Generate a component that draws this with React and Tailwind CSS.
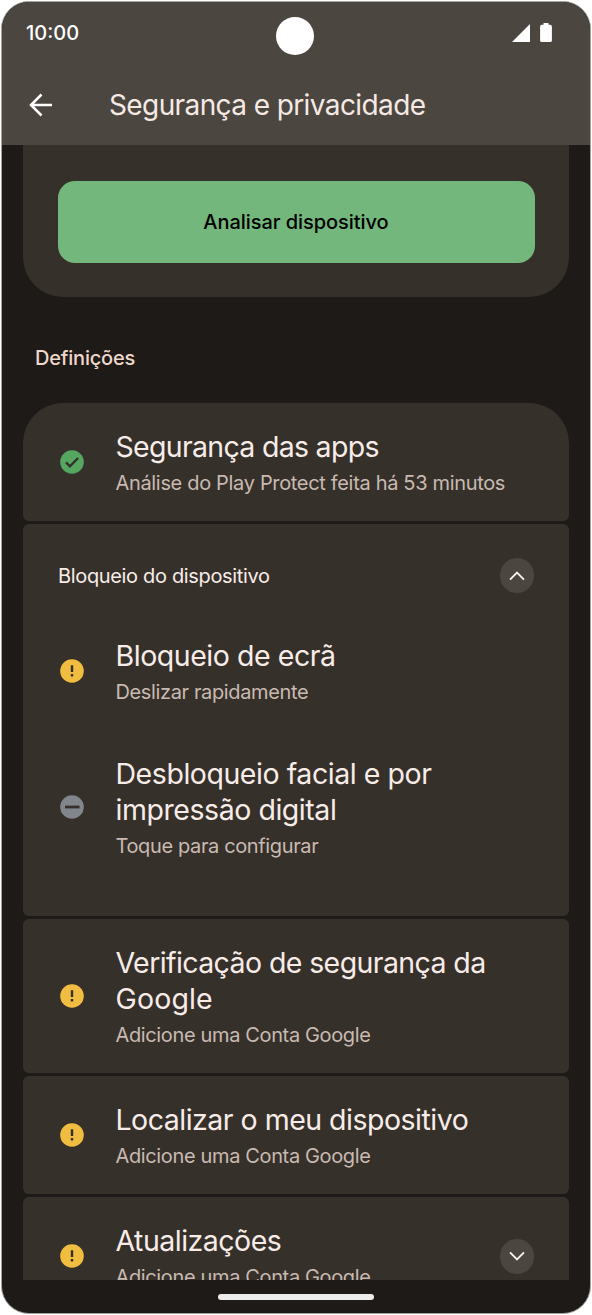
import React, { useState } from 'react';
import clsx from 'clsx';

function StatusIcon({ type }) {
    return (
        <svg width="24" height="24" viewBox="0 0 24 24" className="shrink-0 -mt-[3px]">
            {type === 'ok' && (
                <>
                    <circle cx="12" cy="12" r="11.8" fill="#54a660" />
                    <path d="M6 12.4l3.9 3.9 8.2-8.3" fill="none" stroke="#36302b" strokeWidth="2.3" />
                </>
            )}
            {type === 'warning' && (
                <>
                    <circle cx="12" cy="12" r="11.8" fill="#f1bd41" />
                    <path d="M12 6.2v6.8M12 15v2.4" fill="none" stroke="#36302b" strokeWidth="2.4" />
                </>
            )}
            {type === 'none' && (
                <>
                    <circle cx="12" cy="12" r="11.8" fill="#80868b" />
                    <path d="M5 12h14.5" fill="none" stroke="#36302b" strokeWidth="2.8" />
                </>
            )}
        </svg>
    );
}

function Toggle({ open, onClick, className }) {
    return (
        <button onClick={onClick} className={clsx('w-[34px] h-[35px] rounded-full bg-[#4b4640] flex items-center justify-center shrink-0', className)}>
            <svg width="18" height="12" viewBox="0 0 18 12" fill="none" stroke="#faf0ec" strokeWidth="1.9">
                <path d={open ? 'M2 9.6l7-7 7 7' : 'M2 2.4l7 7 7-7'} />
            </svg>
        </button>
    );
}

function Row({ status, title, summary, titleClass, summaryClass, children }) {
    return (
        <div className="flex items-center pl-[37px] pr-[35px] pt-[26px] pb-[23px]">
            <StatusIcon type={status} />
            <div className="ml-[31.5px] flex-1 whitespace-nowrap">
                <h3 className={clsx('text-[28.5px] leading-9 text-[#f8ece8]', titleClass)}>{title}</h3>
                <p className={clsx('mt-1 text-[20px] leading-[29px] text-[#c9bab1]', summaryClass)}>{summary}</p>
            </div>
            {children}
        </div>
    );
}

function Card({ className, children }) {
    return <section className={clsx('bg-[#36302b]', className)}>{children}</section>;
}

export default function App() {
    const [lockOpen, setLockOpen] = useState(true);
    const [updatesOpen, setUpdatesOpen] = useState(false);

    return (
        <div className="w-[592px] h-[1315px] bg-white p-px font-['Inter',sans-serif]">
            <div className="h-[1313px] flex flex-col overflow-hidden rounded-[28px] border border-[#a5a59f] bg-[#1e1a17]">
                <header className="relative h-[143px] shrink-0 bg-[#4b4640]">
                    <div className="flex items-center justify-between h-[62px] pl-6 pr-[38px]">
                        <span className="text-[20px] font-medium text-white">10:00</span>
                        <div className="flex items-center gap-[10px] -mt-px">
                            <svg width="18" height="18" viewBox="0 0 18 18" fill="#fff">
                                <path d="M18 0v18H0z" />
                            </svg>
                            <svg width="12" height="19" viewBox="0 0 12 19" fill="#fff">
                                <path d="M3.5 0h5v1.8h1.8a1.6 1.6 0 0 1 1.6 1.6v14a1.6 1.6 0 0 1-1.6 1.6H1.7a1.6 1.6 0 0 1-1.6-1.6v-14a1.6 1.6 0 0 1 1.6-1.6h1.8z" />
                            </svg>
                        </div>
                    </div>
                    {/* camera cutout */}
                    <div className="absolute left-[274px] top-[15px] size-[38px] rounded-full bg-white" />
                    <div className="flex items-center h-[81px] pl-[27px]">
                        <svg width="24" height="24" viewBox="0 0 24 24" fill="none" stroke="#fff" strokeWidth="2.5">
                            <path d="M23 12H2.5M12.5 1.5L2 12l10.5 10.5" />
                        </svg>
                        <h1 className="ml-[56px] text-[28px] leading-9 tracking-[-0.6px] whitespace-nowrap text-[#f6e9e4]">
                            Segurança e privacidade
                        </h1>
                    </div>
                </header>

                <main className="flex-1 min-h-0 overflow-hidden px-[21px]">
                    <Card className="rounded-b-[40px] pt-9 pb-[34px] px-[34.5px]">
                        <button className="block w-full h-[82px] rounded-[17px] bg-[#74b77c] text-[20px] font-medium tracking-[-0.05px] text-black">
                            Analisar dispositivo
                        </button>
                    </Card>

                    <h2 className="pl-3 mt-[47px] mb-[30px] text-[20px] leading-[29px] font-medium tracking-[-0.2px] text-[#eed8cb]">
                        Definições
                    </h2>

                    <div className="flex flex-col gap-[3px]">
                        <Card className="rounded-t-[40px] rounded-b-[6px]">
                            <Row status="ok" title="Segurança das apps" summary="Análise do Play Protect feita há 53 minutos" titleClass="tracking-[-0.7px]" summaryClass="tracking-[-0.33px]" />
                        </Card>

                        <Card className="rounded-[6px] pb-8">
                            <div className="flex items-center justify-between px-[35px] pt-[34px] pb-[19px]">
                                <h3 className="mt-[2px] text-[20px] leading-[29px] tracking-[-0.34px] text-[#f8ece8]">Bloqueio do dispositivo</h3>
                                <Toggle open={lockOpen} onClick={() => setLockOpen(!lockOpen)} />
                            </div>
                            {lockOpen && (
                                <>
                                    <Row status="warning" title="Bloqueio de ecrã" summary="Deslizar rapidamente" titleClass="tracking-[-0.45px]" summaryClass="tracking-[-0.37px]" />
                                    <Row status="none" title={<>Desbloqueio facial e por<br />impressão digital</>} summary="Toque para configurar" titleClass="tracking-[-0.45px]" summaryClass="tracking-[-0.37px]" />
                                </>
                            )}
                        </Card>

                        <Card className="rounded-[6px]">
                            <Row status="warning" title={<>Verificação de segurança da<br /><span className="tracking-[0.15px]">Google</span></>} summary="Adicione uma Conta Google" titleClass="tracking-[-0.6px]" summaryClass="tracking-[-0.36px]" />
                        </Card>

                        <Card className="rounded-[6px]">
                            <Row status="warning" title="Localizar o meu dispositivo" summary="Adicione uma Conta Google" titleClass="tracking-[-0.5px]" summaryClass="tracking-[-0.36px]" />
                        </Card>

                        <Card className="rounded-[6px]">
                            <Row status="warning" title="Atualizações" summary="Adicione uma Conta Google" titleClass="tracking-[-0.5px]" summaryClass="tracking-[-0.36px]">
                                <Toggle open={updatesOpen} onClick={() => setUpdatesOpen(!updatesOpen)} className="-mt-[3px]" />
                            </Row>
                        </Card>
                    </div>
                </main>

                <footer className="h-[33px] shrink-0 flex justify-center pt-[14px]">
                    <div className="w-[156px] h-[6px] rounded-full bg-[#ececec]" />
                </footer>
            </div>
        </div>
    );
}
